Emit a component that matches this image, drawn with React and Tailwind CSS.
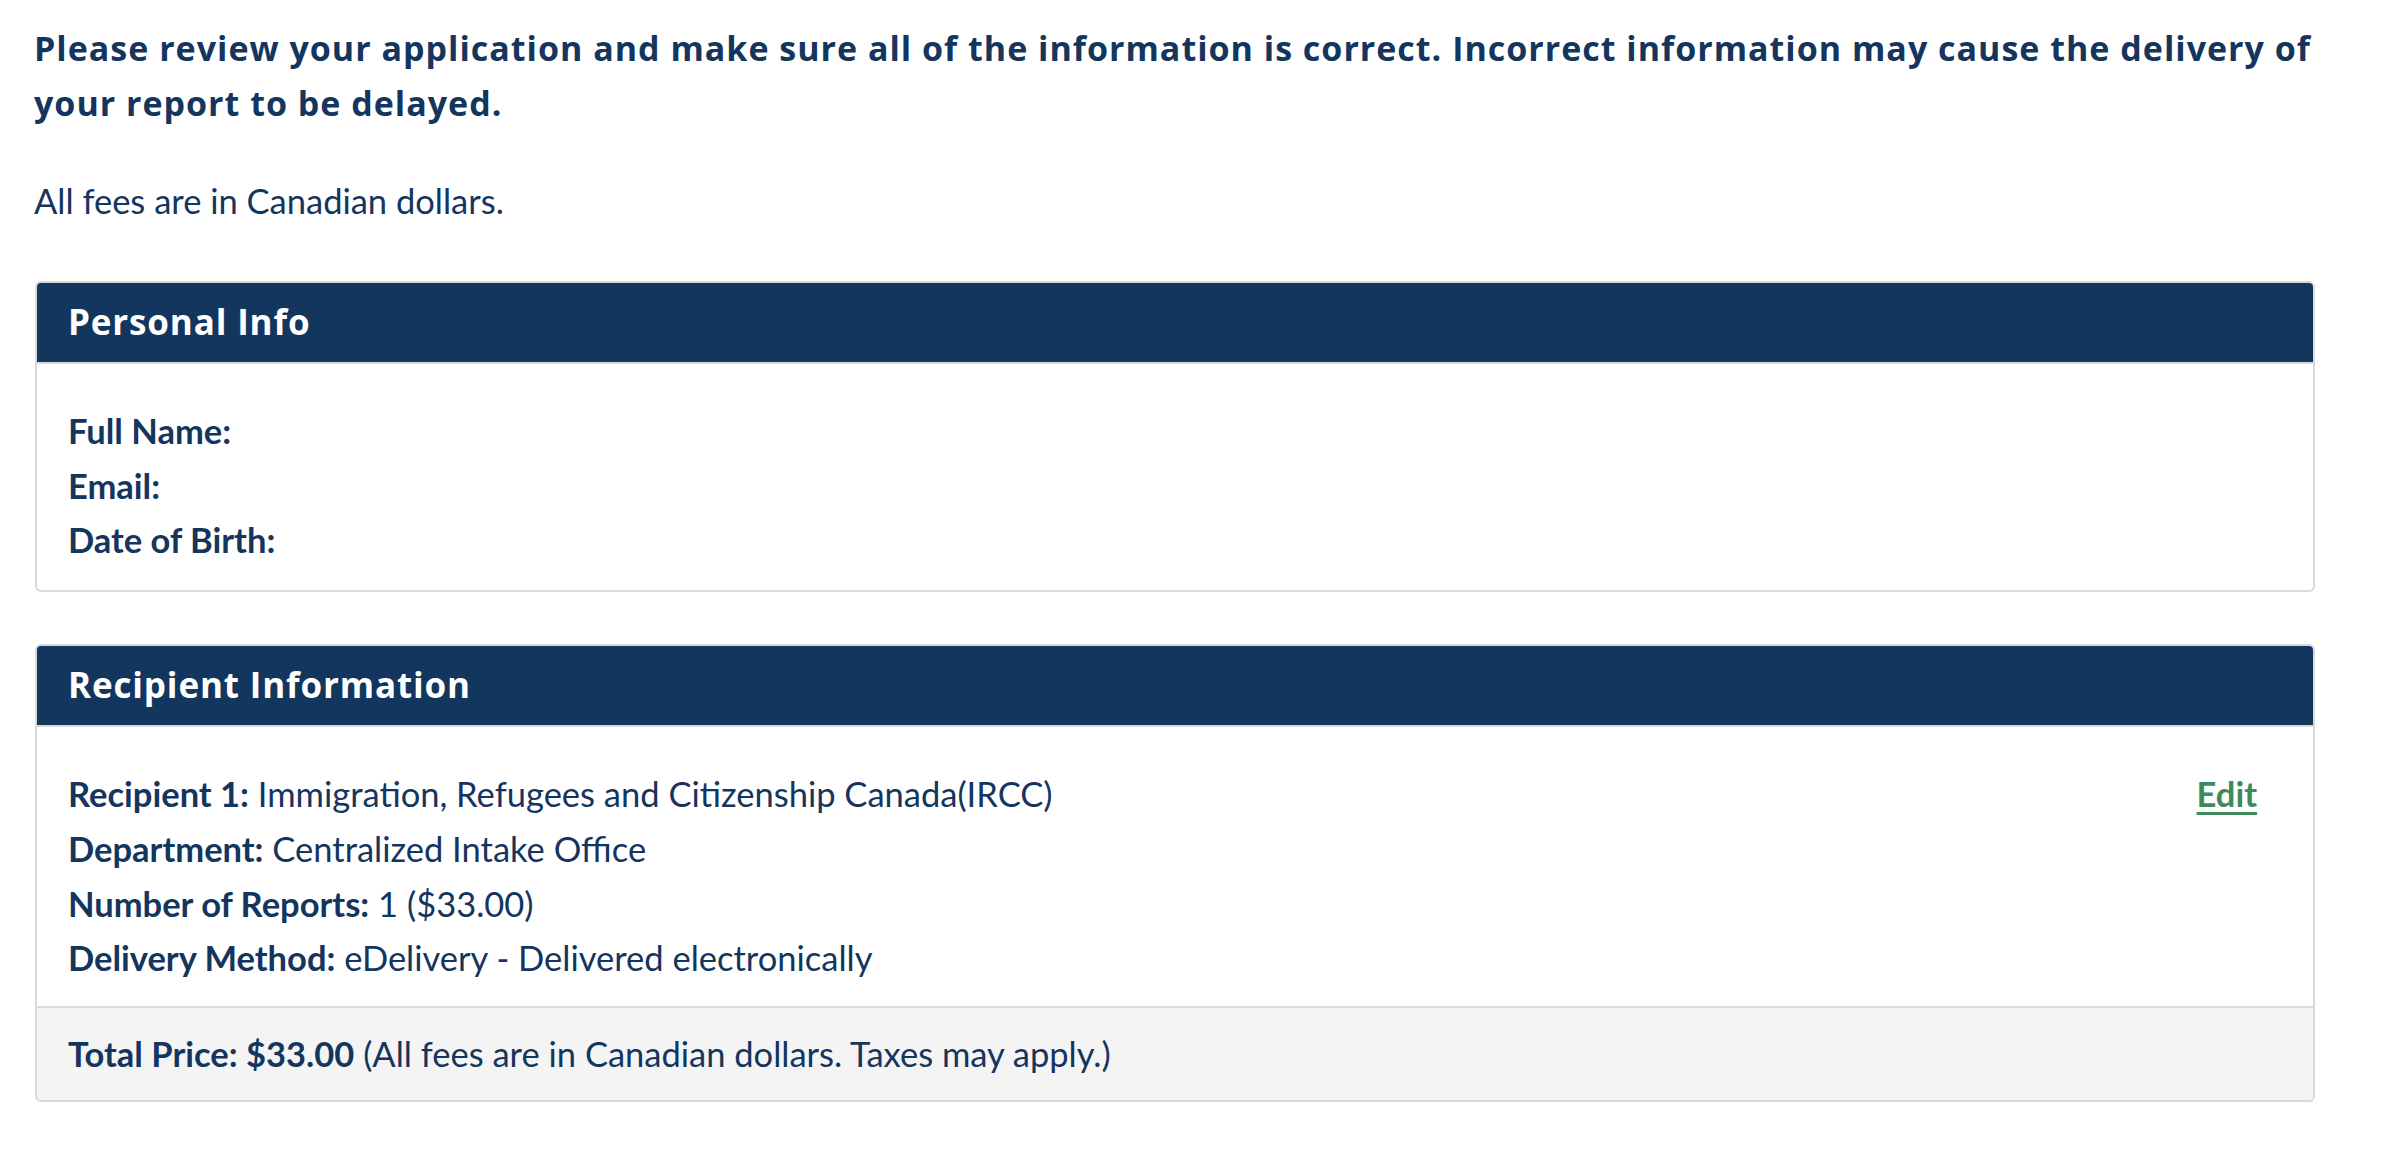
const HEAD_FONT = "font-['Open_Sans',sans-serif]";
const BODY_FONT = "font-['Lato',sans-serif]";

function Card({ title, children, footer }) {
  return (
    <section className="rounded-[6px] border-2 border-[#d9d9d9] overflow-hidden bg-white">
      <div className="h-[79px] flex items-center px-[31px] bg-[#13365f]">
        <h2 className={`${HEAD_FONT} text-white text-[35px] font-bold tracking-[0.85px]`}>{title}</h2>
      </div>
      <div className="border-t-2 border-[#d9d9d9]">{children}</div>
      {footer && (
        <div className="border-t-2 border-[#dcdcdc] bg-[#f4f4f4] h-[94px] flex items-center px-[31px]">
          {footer}
        </div>
      )}
    </section>
  );
}

function Row({ label, value }) {
  return (
    <p className="leading-[54.7px]">
      <b className="font-bold">{label}</b>
      {value ? " " + value : ""}
    </p>
  );
}

export default function App() {
  return (
    <div className={`min-h-screen bg-white text-[#14355e] ${BODY_FONT} text-[34.5px] pl-[34px] pr-[67px] pt-[21px]`}>
      <h1 className={`${HEAD_FONT} font-bold text-[34px] leading-[55px] tracking-[1px]`}>
        Please review your application and make sure all of the information is correct. Incorrect information may cause the delivery of
        <br />
        your report to be delayed.
      </h1>

      <p className="mt-[43px] leading-[54px]">All fees are in Canadian dollars.</p>

      <div className="mt-[53px] flex flex-col gap-[52px] pl-px">
        <Card title="Personal Info">
          <div className="px-[31px] pt-[40px] pb-[22px]">
            <Row label="Full Name:" />
            <Row label="Email:" />
            <Row label="Date of Birth:" />
          </div>
        </Card>

        <Card
          title="Recipient Information"
          footer={
            <p>
              <b className="font-bold">Total Price: $33.00</b> (All fees are in Canadian dollars. Taxes may apply.)
            </p>
          }
        >
          <div className="px-[31px] pt-[40px] pb-[20px] flex justify-between">
            <div>
              <Row label="Recipient 1:" value="Immigration, Refugees and Citizenship Canada(IRCC)" />
              <Row label="Department:" value="Centralized Intake Office" />
              <Row label="Number of Reports:" value="1 ($33.00)" />
              <Row label="Delivery Method:" value="eDelivery - Delivered electronically" />
            </div>
            <a href="#" className="mr-[25px] leading-[54.7px] font-bold text-[#3e8a58] underline underline-offset-[5px] decoration-[3px]">
              Edit
            </a>
          </div>
        </Card>
      </div>
    </div>
  );
}
